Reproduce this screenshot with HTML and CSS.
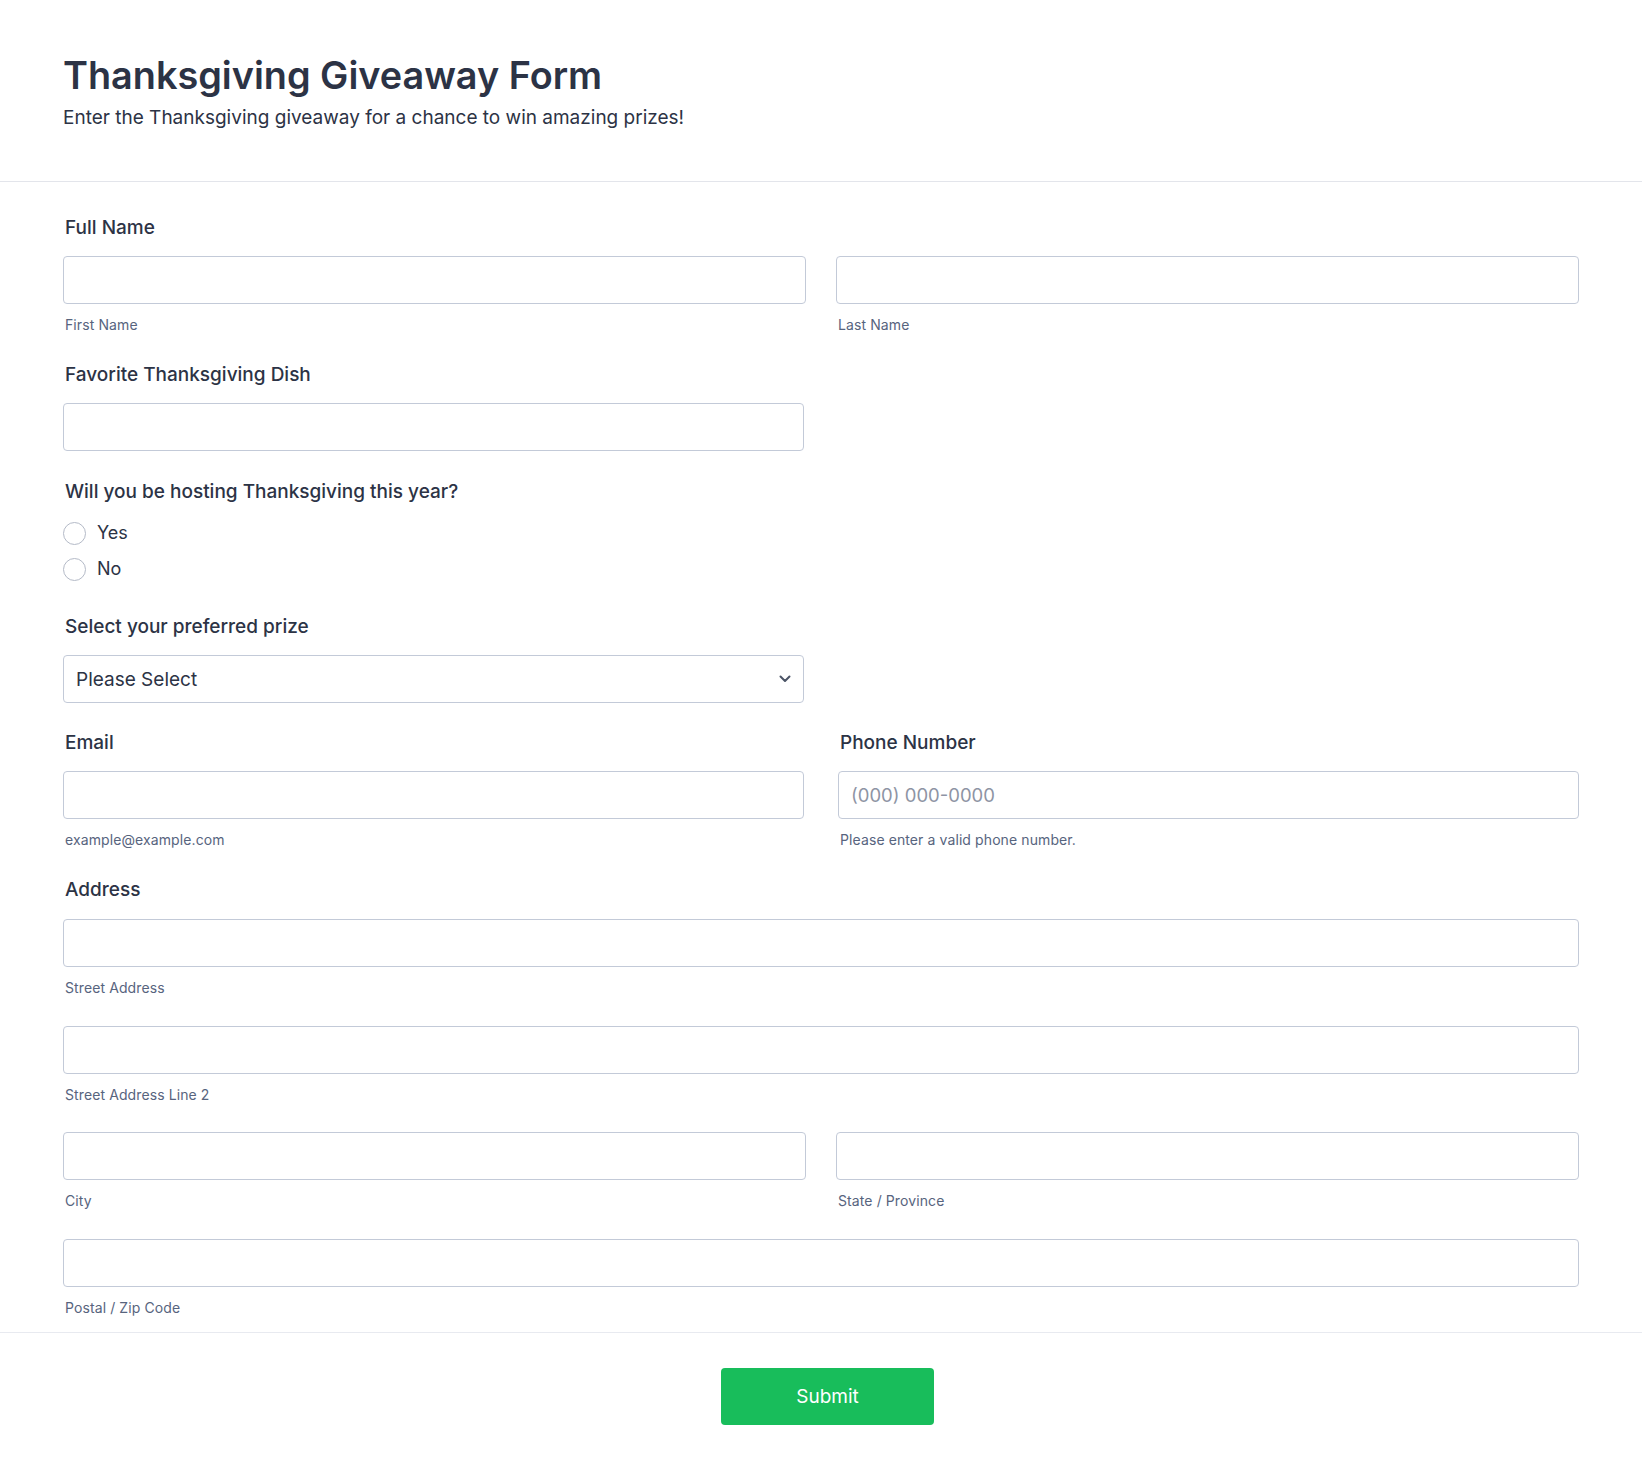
FILE: index.html
```html
<!DOCTYPE html>
<html lang="en">
<head>
<meta charset="utf-8">
<title>Thanksgiving Giveaway Form</title>
<link rel="stylesheet" href="styles.css">
</head>
<body>
<header class="form-header">
  <h1 class="form-title">Thanksgiving Giveaway Form</h1>
  <p class="form-subtitle">Enter the Thanksgiving giveaway for a chance to win amazing prizes!</p>
</header>

<main class="form-body">
  <div class="field">
    <div class="field-label">Full Name</div>
    <div class="row row-name">
      <div class="sub">
        <input class="input" type="text">
        <span class="sublabel">First Name</span>
      </div>
      <div class="sub">
        <input class="input" type="text">
        <span class="sublabel">Last Name</span>
      </div>
    </div>
  </div>

  <div class="field">
    <div class="field-label">Favorite Thanksgiving Dish</div>
    <div class="half">
      <input class="input" type="text">
    </div>
  </div>

  <div class="field field-after-input">
    <div class="field-label">Will you be hosting Thanksgiving this year?</div>
    <div class="radios">
      <label class="radio"><span class="radio-circle"></span><span class="radio-text">Yes</span></label>
      <label class="radio"><span class="radio-circle"></span><span class="radio-text">No</span></label>
    </div>
  </div>

  <div class="field field-after-radio">
    <div class="field-label">Select your preferred prize</div>
    <div class="half">
      <div class="select">
        <span class="select-text">Please Select</span>
        <svg class="chevron" width="12" height="8" viewBox="0 0 12 8"><path d="M1.5 1.5 L6 6 L10.5 1.5" fill="none" stroke="#4b5466" stroke-width="2" stroke-linecap="round" stroke-linejoin="round"/></svg>
      </div>
    </div>
  </div>

  <div class="field">
    <div class="row row-contact">
      <div class="col">
        <div class="field-label label-contact">Email</div>
        <input class="input" type="text">
        <span class="sublabel">example@example.com</span>
      </div>
      <div class="col">
        <div class="field-label label-contact">Phone Number</div>
        <input class="input" type="text" placeholder="(000) 000-0000">
        <span class="sublabel">Please enter a valid phone number.</span>
      </div>
    </div>
  </div>

  <div class="field">
    <div class="field-label label-address">Address</div>
    <div class="sub">
      <input class="input" type="text">
      <span class="sublabel">Street Address</span>
    </div>
    <div class="sub sub-next">
      <input class="input" type="text">
      <span class="sublabel">Street Address Line 2</span>
    </div>
    <div class="row row-name sub-next">
      <div class="sub">
        <input class="input" type="text">
        <span class="sublabel">City</span>
      </div>
      <div class="sub">
        <input class="input" type="text">
        <span class="sublabel">State / Province</span>
      </div>
    </div>
    <div class="sub sub-next">
      <input class="input" type="text">
      <span class="sublabel">Postal / Zip Code</span>
    </div>
  </div>
</main>

<footer class="form-footer">
  <button class="submit" type="button">Submit</button>
</footer>
</body>
</html>
```

FILE: styles.css
```css
* { box-sizing: border-box; }

body {
  margin: 0;
  background: #ffffff;
  font-family: Inter, "Noto Sans", "Liberation Sans", sans-serif;
  color: #2c3345;
}

.form-header {
  padding: 52px 63px 50px;
  border-bottom: 1px solid #e3e5eb;
}

.form-title {
  margin: 0;
  font-size: 37.8px;
  line-height: 46px;
  font-weight: 600;
  color: #2c3345;
}

.form-subtitle {
  margin: 6px 0 0;
  font-size: 19px;
  line-height: 27px;
  font-weight: 400;
  color: #2c3345;
}

.form-body {
  padding: 34px 63px 14px;
  border-bottom: 1px solid #e8eaf0;
}

.field { display: flex; flex-direction: column; margin-top: 28px; }
.field:first-child { margin-top: 0; }
.field-after-input { margin-top: 29px; }
.field-after-radio { margin-top: 34px; }

.field-label {
  font-size: 19px;
  line-height: 24px;
  font-weight: 500;
  color: #2c3345;
  padding-left: 2px;
  margin-bottom: 16px;
}

.label-contact { margin-bottom: 16px; }
.label-address { margin-bottom: 17px; }

.row { display: flex; }
.row-name { gap: 30px; }
.row-name > .sub { flex: 1 1 0; }
.row-contact { gap: 34px; }
.row-contact > .col { flex: 1 1 0; display: flex; flex-direction: column; }

.half { width: 741px; }

.sub { display: flex; flex-direction: column; }
.sub-next { margin-top: 27.5px; }

.input {
  display: block;
  width: 100%;
  height: 48px;
  margin: 0;
  padding: 0 12px;
  border: 1px solid #c3cad8;
  border-radius: 4px;
  background: #ffffff;
  font-family: inherit;
  font-size: 18.5px;
  color: #2c3345;
  outline: none;
}

.input::placeholder { color: #8e94a4; }

.sublabel {
  margin-top: 11px;
  padding-left: 2px;
  font-size: 14px;
  letter-spacing: 0.1px;
  line-height: 20px;
  color: #57647e;
}

.radios {
  display: flex;
  flex-direction: column;
  gap: 12px;
  margin-top: 1px;
}

.radio {
  display: flex;
  align-items: center;
  height: 24px;
  gap: 11px;
}

.radio-circle {
  width: 23px;
  height: 23px;
  border: 1px solid #b4bac7;
  border-radius: 50%;
  background: #ffffff;
  flex: none;
}

.radio-text {
  font-size: 18px;
  line-height: 24px;
  color: #2c3345;
}

.select {
  display: flex;
  align-items: center;
  justify-content: space-between;
  height: 48px;
  padding: 0 12px 0 12px;
  border: 1px solid #c3cad8;
  border-radius: 4px;
  background: #ffffff;
}

.select-text {
  font-size: 19px;
  color: #2c3345;
}

.form-footer {
  display: flex;
  justify-content: center;
  padding: 35px 0 47px 13px;
}

.submit {
  width: 213px;
  height: 57px;
  border: none;
  border-radius: 4px;
  background: #18bd5b;
  color: #ffffff;
  font-family: inherit;
  font-size: 19px;
  font-weight: 400;
  cursor: pointer;
}
```
